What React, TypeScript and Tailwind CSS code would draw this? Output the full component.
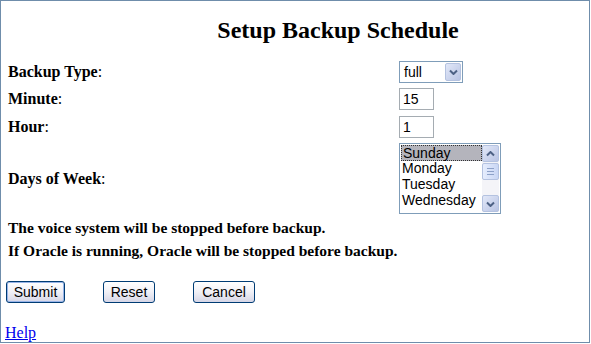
import React from 'react';

const serif = { fontFamily: '"Liberation Serif", "Times New Roman", serif' };
const sans = { fontFamily: '"Liberation Sans", Arial, sans-serif' };

const Chevron = ({ up = false }: { up?: boolean }) => (
  <svg width="9" height="6" viewBox="0 0 9 6" className={up ? 'rotate-180' : ''}>
    <path d="M1 1.5 L4.5 5 L8 1.5" fill="none" stroke="#4d6185" strokeWidth="2" />
  </svg>
);

const ArrowBox = ({ up = false, className = '' }: { up?: boolean; className?: string }) => (
  <div
    className={`flex items-center justify-center rounded-[2px] border border-[#b4c2e0] bg-gradient-to-br from-[#e2e8f8] to-[#b9c4e4] ${className}`}
  >
    <Chevron up={up} />
  </div>
);

const Label = ({ text }: { text: string }) => (
  <span className="text-[16px] text-black">
    <b>{text}</b>:
  </span>
);

const XpButton = ({ text, className, focused = false }: { text: string; className: string; focused?: boolean }) => (
  <button
    className={`${className} h-[22px] rounded-[3px] border border-[#003c74] bg-gradient-to-b from-white via-[#f0f0f6] to-[#d6d6e6] text-[14px] leading-none text-black ${
      focused ? 'shadow-[inset_0_0_0_1px_#98b4e8]' : ''
    }`}
    style={sans}
  >
    {text}
  </button>
);

export default function App() {
  const days = ['Sunday', 'Monday', 'Tuesday', 'Wednesday'];

  return (
    <div className="w-[590px] h-[343px] overflow-hidden border border-[#6f8dab] bg-white" style={serif}>
      <h1 className="pl-[86px] pt-[15px] text-center text-[24px] font-bold leading-[28px] text-black">
        Setup Backup Schedule
      </h1>

      <div className="mt-[17px] grid grid-cols-[391px_auto] pl-[7px]">
        <div className="flex h-[22px] items-center">
          <Label text="Backup Type" />
        </div>
        <div
          className="flex h-[22px] w-[64px] items-center justify-between border border-[#7f9db9] pl-[4px] pr-[1px]"
          style={sans}
        >
          <span className="text-[14px]">full</span>
          <ArrowBox className="h-[18px] w-[16px]" />
        </div>

        <div className="mt-[5px] flex h-[22px] items-center">
          <Label text="Minute" />
        </div>
        <div
          className="mt-[5px] flex h-[22px] w-[35px] items-center border border-[#a5acb2] pl-[3px] text-[14px]"
          style={sans}
        >
          15
        </div>

        <div className="mt-[6px] flex h-[22px] items-center">
          <Label text="Hour" />
        </div>
        <div
          className="mt-[6px] flex h-[22px] w-[35px] items-center border border-[#a5acb2] pl-[3px] text-[14px]"
          style={sans}
        >
          1
        </div>

        <div className="mt-[5px] flex h-[71px] items-center">
          <Label text="Days of Week" />
        </div>
        <div className="mt-[5px] flex h-[71px] w-[102px] border border-[#7f9db9] p-[1px]" style={sans}>
          <div className="flex flex-1 flex-col">
            {days.map((d, i) => (
              <div
                key={d}
                className={`h-[16px] pl-[1px] text-[14px] leading-[15px] text-black ${
                  i === 0 ? 'border border-dotted border-[#333] bg-[#b4b4bc] pl-0' : ''
                }`}
              >
                {d}
              </div>
            ))}
          </div>
          <div className="flex w-[17px] flex-col bg-[#f4f4f8]">
            <ArrowBox up className="h-[17px] w-[17px]" />
            <div className="mt-[1px] flex h-[17px] w-[17px] flex-col items-center justify-center gap-[2px] rounded-[2px] border border-[#b4c2e0] bg-gradient-to-r from-[#e6edfd] to-[#c9d6f4]">
              <div className="h-px w-[7px] bg-[#8da1c8]" />
              <div className="h-px w-[7px] bg-[#8da1c8]" />
              <div className="h-px w-[7px] bg-[#8da1c8]" />
            </div>
            <div className="flex-1" />
            <ArrowBox className="h-[17px] w-[17px]" />
          </div>
        </div>
      </div>

      <div className="mt-[2px] pl-[7px] text-[15.5px] font-bold leading-[23px] text-black">
        <p>The voice system will be stopped before backup.</p>
        <p>If Oracle is running, Oracle will be stopped before backup.</p>
      </div>

      <div className="mt-[19px] flex pl-[5px]">
        <XpButton text="Submit" className="w-[59px]" focused />
        <XpButton text="Reset" className="ml-[38px] w-[52px]" />
        <XpButton text="Cancel" className="ml-[38px] w-[62px]" />
      </div>

      <div className="mt-[21px] pl-[4px] leading-[18px]">
        <a href="#" className="text-[16px] text-[#0000ee] underline">
          Help
        </a>
      </div>
    </div>
  );
}
